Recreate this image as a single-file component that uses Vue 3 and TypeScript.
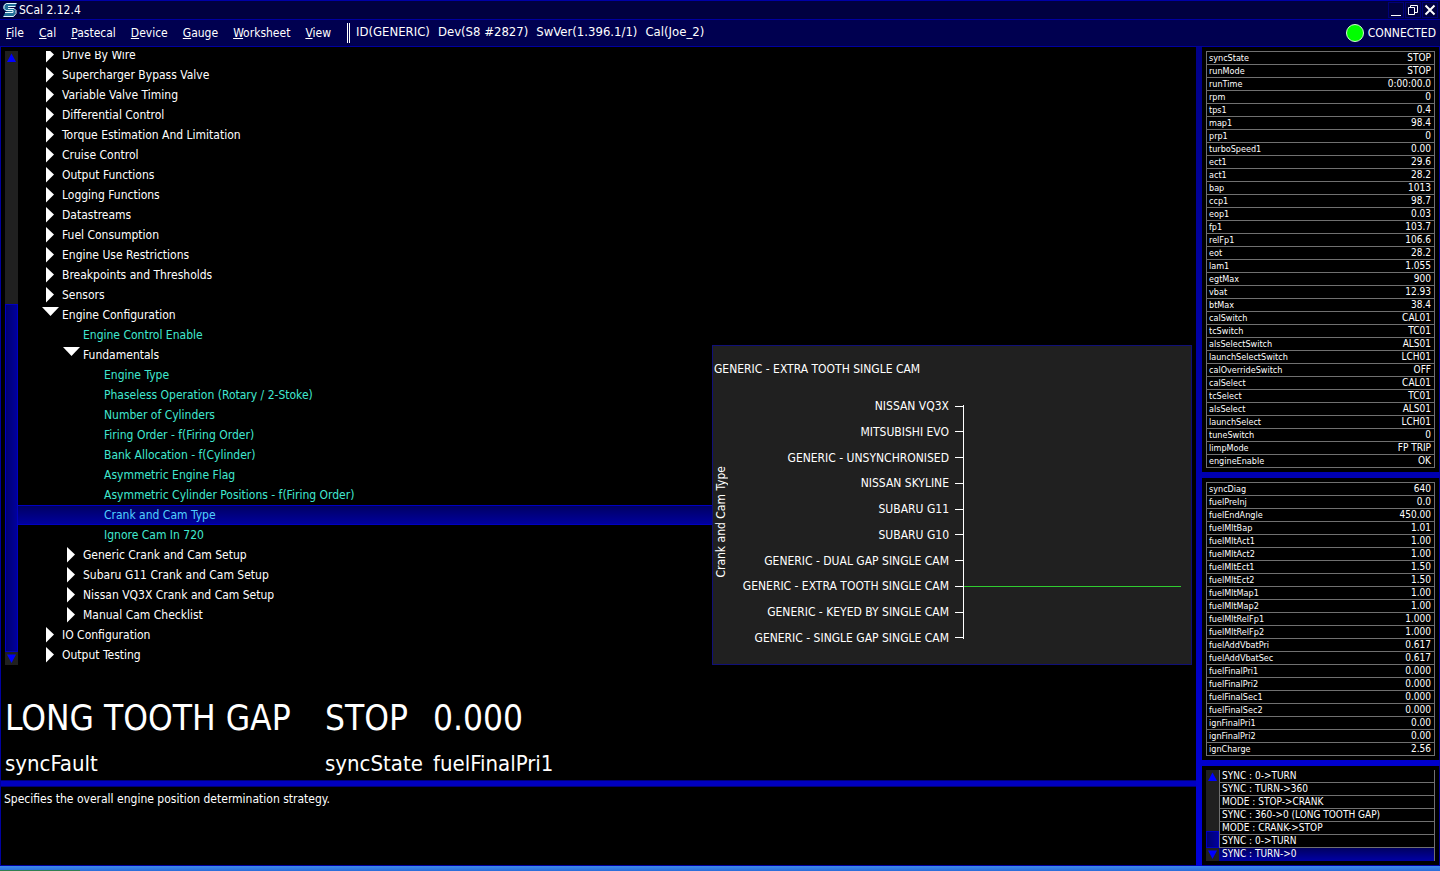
<script setup lang="ts">
import { ref } from 'vue'

interface TreeNode {
  label: string
  level: number
  kind: 'closed' | 'open' | 'leaf'
}

const menus: string[] = ['File', 'Cal', 'Pastecal', 'Device', 'Gauge', 'Worksheet', 'View']
const deviceInfo: string[] = ['ID(GENERIC)', 'Dev(S8 #2827)', 'SwVer(1.396.1/1)', 'Cal(Joe_2)']

const node = (label: string, level = 0, kind: TreeNode['kind'] = 'closed'): TreeNode => ({ label, level, kind })

const tree: TreeNode[] = [
  node('Drive By Wire'),
  node('Supercharger Bypass Valve'),
  node('Variable Valve Timing'),
  node('Differential Control'),
  node('Torque Estimation And Limitation'),
  node('Cruise Control'),
  node('Output Functions'),
  node('Logging Functions'),
  node('Datastreams'),
  node('Fuel Consumption'),
  node('Engine Use Restrictions'),
  node('Breakpoints and Thresholds'),
  node('Sensors'),
  node('Engine Configuration', 0, 'open'),
  node('Engine Control Enable', 1, 'leaf'),
  node('Fundamentals', 1, 'open'),
  node('Engine Type', 2, 'leaf'),
  node('Phaseless Operation (Rotary / 2-Stoke)', 2, 'leaf'),
  node('Number of Cylinders', 2, 'leaf'),
  node('Firing Order - f(Firing Order)', 2, 'leaf'),
  node('Bank Allocation - f(Cylinder)', 2, 'leaf'),
  node('Asymmetric Engine Flag', 2, 'leaf'),
  node('Asymmetric Cylinder Positions - f(Firing Order)', 2, 'leaf'),
  node('Crank and Cam Type', 2, 'leaf'),
  node('Ignore Cam In 720', 2, 'leaf'),
  node('Generic Crank and Cam Setup', 1),
  node('Subaru G11 Crank and Cam Setup', 1),
  node('Nissan VQ3X Crank and Cam Setup', 1),
  node('Manual Cam Checklist', 1),
  node('IO Configuration'),
  node('Output Testing'),
]
const selected = ref<string>('Crank and Cam Type')

const options: string[] = [
  'NISSAN VQ3X',
  'MITSUBISHI EVO',
  'GENERIC - UNSYNCHRONISED',
  'NISSAN SKYLINE',
  'SUBARU G11',
  'SUBARU G10',
  'GENERIC - DUAL GAP SINGLE CAM',
  'GENERIC - EXTRA TOOTH SINGLE CAM',
  'GENERIC - KEYED BY SINGLE CAM',
  'GENERIC - SINGLE GAP SINGLE CAM',
]
const option = ref<string>('GENERIC - EXTRA TOOTH SINGLE CAM')

const gauges = [
  { value: 'LONG TOOTH GAP', name: 'syncFault' },
  { value: 'STOP', name: 'syncState' },
  { value: '0.000', name: 'fuelFinalPri1' },
]

const tables: [string, string][][] = [
  [
    ['syncState', 'STOP'], ['runMode', 'STOP'], ['runTime', '0:00:00.0'], ['rpm', '0'],
    ['tps1', '0.4'], ['map1', '98.4'], ['prp1', '0'], ['turboSpeed1', '0.00'],
    ['ect1', '29.6'], ['act1', '28.2'], ['bap', '1013'], ['ccp1', '98.7'],
    ['eop1', '0.03'], ['fp1', '103.7'], ['relFp1', '106.6'], ['eot', '28.2'],
    ['lam1', '1.055'], ['egtMax', '900'], ['vbat', '12.93'], ['btMax', '38.4'],
    ['calSwitch', 'CAL01'], ['tcSwitch', 'TC01'], ['alsSelectSwitch', 'ALS01'],
    ['launchSelectSwitch', 'LCH01'], ['calOverrideSwitch', 'OFF'], ['calSelect', 'CAL01'],
    ['tcSelect', 'TC01'], ['alsSelect', 'ALS01'], ['launchSelect', 'LCH01'],
    ['tuneSwitch', '0'], ['limpMode', 'FP TRIP'], ['engineEnable', 'OK'],
  ],
  [
    ['syncDiag', '640'], ['fuelPreInj', '0.0'], ['fuelEndAngle', '450.00'],
    ['fuelMltBap', '1.01'], ['fuelMltAct1', '1.00'], ['fuelMltAct2', '1.00'],
    ['fuelMltEct1', '1.50'], ['fuelMltEct2', '1.50'], ['fuelMltMap1', '1.00'],
    ['fuelMltMap2', '1.00'], ['fuelMltRelFp1', '1.000'], ['fuelMltRelFp2', '1.000'],
    ['fuelAddVbatPri', '0.617'], ['fuelAddVbatSec', '0.617'], ['fuelFinalPri1', '0.000'],
    ['fuelFinalPri2', '0.000'], ['fuelFinalSec1', '0.000'], ['fuelFinalSec2', '0.000'],
    ['ignFinalPri1', '0.00'], ['ignFinalPri2', '0.00'], ['ignCharge', '2.56'],
  ],
]

const log: string[] = [
  'SYNC : 0->TURN',
  'SYNC : TURN->360',
  'MODE : STOP->CRANK',
  'SYNC : 360->0 (LONG TOOTH GAP)',
  'MODE : CRANK->STOP',
  'SYNC : 0->TURN',
  'SYNC : TURN->0',
]
</script>

<template>
  <div class="window">
    <header class="title-bar">
      <svg class="logo" viewBox="0 0 14 14" aria-hidden="true">
        <path d="M3 0H14L12 4H5L12 6L13 9L11 13L9 14H0L2 10H9L2 8L0 5L1 2Z" fill="#1f6f98" />
        <path
          d="M13.500 0.500H3.500L1 2.500V5.500L3 7.500H10V9.500H2M5 3.500H12.500M5 5.500H11L13 7.500V10.500L10.500 13.500H0.500"
          stroke="#e4f8ff"
          fill="none"
        />
      </svg>
      <h1>SCal 2.12.4</h1>
      <div class="window-buttons">
        <button type="button" aria-label="Minimise">
          <svg viewBox="0 0 14 14"><path d="M2 12.500H12" /></svg>
        </button>
        <button type="button" aria-label="Restore">
          <svg viewBox="0 0 14 14"><path d="M2.500 4.500H8.500V11.500H2.500ZM4.500 4.500V2.500H11.500V9.500H8.500" /></svg>
        </button>
        <button type="button" aria-label="Close">
          <svg viewBox="0 0 14 14"><path class="thick" d="M2.500 2.500L11.500 11.500M11.500 2.500L2.500 11.500" /></svg>
        </button>
      </div>
    </header>

    <div class="menu-bar">
      <nav>
        <button v-for="m in menus" :key="m" type="button"><u>{{ m[0] }}</u>{{ m.slice(1) }}</button>
      </nav>
      <div class="device">
        <span v-for="d in deviceInfo" :key="d">{{ d }}</span>
      </div>
      <div class="connection"><i class="lamp"></i>CONNECTED</div>
    </div>

    <main>
      <section class="work">
        <div class="browser">
          <div class="scrollbar">
            <svg viewBox="0 0 13 12"><path d="M2 10.500L6.500 2L11 10.500Z" /></svg>
            <div class="gap"></div>
            <div class="thumb"></div>
            <svg viewBox="0 0 13 12"><path d="M2 2L6.500 10.500L11 2Z" /></svg>
          </div>
          <ul class="tree">
            <li v-for="n in tree" :key="n.label">
              <button
                type="button"
                :class="['l' + n.level, n.kind, { selected: n.label === selected }]"
                @click="selected = n.label"
              >
                <svg viewBox="0 0 20 20" aria-hidden="true">
                  <path v-if="n.kind === 'closed'" d="M4 2V17.500L12 9.500Z" />
                  <path v-else-if="n.kind === 'open'" d="M0 2H17L8.500 11Z" />
                </svg>
                <span>{{ n.label }}</span>
              </button>
            </li>
          </ul>
          <div class="chart">
            <h2>{{ option }}</h2>
            <div class="plot">
              <div class="axis-name"><span>Crank and Cam Type</span></div>
              <ul class="options">
                <li v-for="o in options" :key="o" :class="{ current: o === option }">
                  <button type="button" @click="option = o">{{ o }}</button>
                  <i class="tick"></i>
                  <i class="level"></i>
                </li>
              </ul>
            </div>
          </div>
        </div>
        <dl class="gauges">
          <div v-for="g in gauges" :key="g.name">
            <dd>{{ g.value }}</dd>
            <dt>{{ g.name }}</dt>
          </div>
        </dl>
        <div class="splitter"></div>
        <p class="help">Specifies the overall engine position determination strategy.</p>
      </section>

      <aside>
        <section v-for="(rows, i) in tables" :key="i" class="panel">
          <table>
            <tbody>
              <tr v-for="[name, value] in rows" :key="name">
                <th scope="row">{{ name }}</th>
                <td>{{ value }}</td>
              </tr>
            </tbody>
          </table>
        </section>
        <section class="panel log-panel">
          <div class="scrollbar">
            <svg viewBox="0 0 13 12"><path d="M2 10.500L6.500 2L11 10.500Z" /></svg>
            <div class="gap"></div>
            <div class="thumb"></div>
            <svg viewBox="0 0 13 12"><path d="M2 2L6.500 10.500L11 2Z" /></svg>
          </div>
          <ol class="log">
            <li v-for="(entry, i) in log" :key="i" :class="{ last: i === log.length - 1 }">{{ entry }}</li>
          </ol>
        </section>
      </aside>
    </main>

    <footer class="taskbar"><span></span></footer>
  </div>
</template>

<style>
body {
  margin: 0;
  background: #000;
}
</style>

<style scoped>
.window {
  display: flex;
  flex-direction: column;
  min-height: 100vh;
  background: #000;
  color: #fff;
  font: 12px/20px 'DejaVu Sans Condensed', Tahoma, 'Noto Sans', sans-serif;
}
.window * {
  box-sizing: border-box;
}
button {
  margin: 0;
  padding: 0;
  border: 0;
  background: none;
  color: inherit;
  font: inherit;
  text-align: left;
  white-space: nowrap;
}
ul, ol, dl, dd, h1, h2, p {
  margin: 0;
  padding: 0;
  list-style: none;
  font-size: inherit;
  font-weight: normal;
}
svg {
  display: block;
  flex: none;
}

.title-bar {
  display: flex;
  align-items: center;
  height: 20px;
  padding: 0 3px;
  border-top: 1px solid #0000a8;
  border-bottom: 1px solid #0000a0;
  background: #000040;
}
.logo {
  width: 14px;
  height: 14px;
  margin-right: 2px;
}
.window-buttons {
  display: flex;
  gap: 3px;
  margin-left: auto;
}
.window-buttons button {
  outline: 1px solid #000078;
}
.window-buttons svg {
  width: 14px;
  height: 14px;
  fill: none;
  stroke: #fff;
}
.thick {
  stroke-width: 2;
}

.menu-bar {
  display: flex;
  align-items: center;
  height: 27px;
  padding: 0 4px 0 6px;
  border-bottom: 1px solid #0000a0;
  background: #000050;
}
nav {
  display: flex;
  gap: 15px;
  margin-right: 16px;
}
.device {
  display: flex;
  gap: 8px;
  padding-left: 6px;
  border-left: 3px double #fff;
  font-size: 13px;
  line-height: 18px;
  padding-bottom: 2px;
  white-space: nowrap;
}
.connection {
  display: flex;
  align-items: center;
  gap: 4px;
  margin-left: auto;
}
.lamp {
  width: 18px;
  height: 18px;
  border: 1px solid #d0ffd0;
  border-radius: 50%;
  background: #00ff00;
}

main {
  display: grid;
  grid-template-columns: 1fr 244px;
  flex: 1;
}
.work {
  display: flex;
  flex-direction: column;
  min-width: 0;
  border-left: 1px solid #0000a0;
}
.browser {
  display: flex;
  padding: 4px 4px 0 4px;
}
.scrollbar {
  display: flex;
  flex: none;
  flex-direction: column;
  width: 13px;
  background: #202020;
}
.scrollbar svg {
  width: 13px;
  height: 13px;
  fill: #0000ff;
}
.gap {
  flex: 241;
}
.thumb {
  flex: 347;
  border: 1px solid #0000c0;
  background: linear-gradient(90deg, #000070, #00009c);
}
.tree {
  flex: 1;
  height: 614px;
  overflow: hidden;
  display: flex;
  flex-direction: column;
  justify-content: flex-end;
}
.tree li {
  flex: none;
}
.tree button {
  display: flex;
  width: 100%;
  height: 20px;
  padding-left: 24px;
}
.tree svg {
  width: 20px;
  height: 20px;
  fill: #fff;
}
.tree .l1 {
  padding-left: 45px;
}
.tree .l2 {
  padding-left: 66px;
}
.tree .leaf {
  color: #40e8d0;
}
.tree .selected {
  background: linear-gradient(#000060, #0000a0);
  box-shadow: inset 0 1px #0000c0, inset 0 -1px #0000c0;
  color: #50d0ff;
}

.chart {
  align-self: flex-end;
  flex: none;
  width: 480px;
  height: 320px;
  padding: 13px 10px 0 1px;
  border: 1px solid #101078;
  background: #202020;
}
.plot {
  display: flex;
  height: 252px;
  margin-top: 17px;
}
.axis-name {
  display: flex;
  align-items: center;
  width: 15px;
}
.axis-name span {
  writing-mode: vertical-rl;
  rotate: 180deg;
  line-height: 14px;
  white-space: nowrap;
}
.options {
  display: flex;
  flex: 1;
  flex-direction: column;
  justify-content: space-between;
  background: linear-gradient(#fff, #fff) 234px 9px / 1px 234px no-repeat;
}
.options li {
  display: grid;
  grid-template-columns: 220px 9px 1fr;
  column-gap: 6px;
  align-items: center;
  height: 20px;
}
.options button {
  text-align: right;
}
.tick {
  height: 1px;
  background: #fff;
}
.level {
  height: 1px;
  margin-left: -6px;
}
.current .level {
  background: #30cc30;
}

.gauges {
  display: flex;
  height: 115px;
  padding: 31px 4px 0;
  white-space: nowrap;
}
.gauges div:nth-child(1) {
  width: 320px;
}
.gauges div:nth-child(2) {
  width: 108px;
}
.gauges dd {
  font-size: 35px;
  line-height: 44px;
}
.gauges dt {
  margin-top: 10px;
  font-size: 22px;
  line-height: 28px;
}
.splitter {
  height: 7px;
  border: solid #000078;
  border-width: 1px 0;
  background: #0000c0;
}
.help {
  flex: 1;
  padding: 2px 3px;
  border-bottom: 1px solid #0000a0;
}

aside {
  padding-left: 6px;
  background: linear-gradient(#000088, #0000d8);
  font-size: 10px;
  line-height: 12px;
}
.panel {
  padding: 4px;
  border-right: 1px solid #000090;
  background: #000;
}
.panel + .panel {
  margin-top: 6px;
}
table {
  width: 100%;
  border: 1px solid #707070;
  border-top: 0;
  border-spacing: 0;
}
th, td {
  height: 13px;
  padding: 0 3px 0 2px;
  border-top: 1px solid #707070;
  font-weight: normal;
  text-align: left;
}
th {
  font-size: 9px;
}
td {
  text-align: right;
}
.log-panel {
  display: flex;
  border-bottom: 1px solid #0000a0;
}
.log-panel .gap {
  flex: 50;
}
.log-panel .thumb {
  flex: 15;
}
.log {
  flex: 1;
  border-right: 1px solid #707070;
}
.log li {
  height: 13px;
  padding-left: 2px;
  border-bottom: 1px solid #707070;
  border-left: 1px solid #707070;
}
.log .last {
  border-color: #0000a0;
  background: linear-gradient(#000060, #0000a0);
}

.taskbar {
  height: 5px;
  background: linear-gradient(#3c88ec, #2a6cd8);
}
.taskbar span {
  display: block;
  width: 80px;
  height: 5px;
  border-bottom: 1px solid #308050;
}
</style>
